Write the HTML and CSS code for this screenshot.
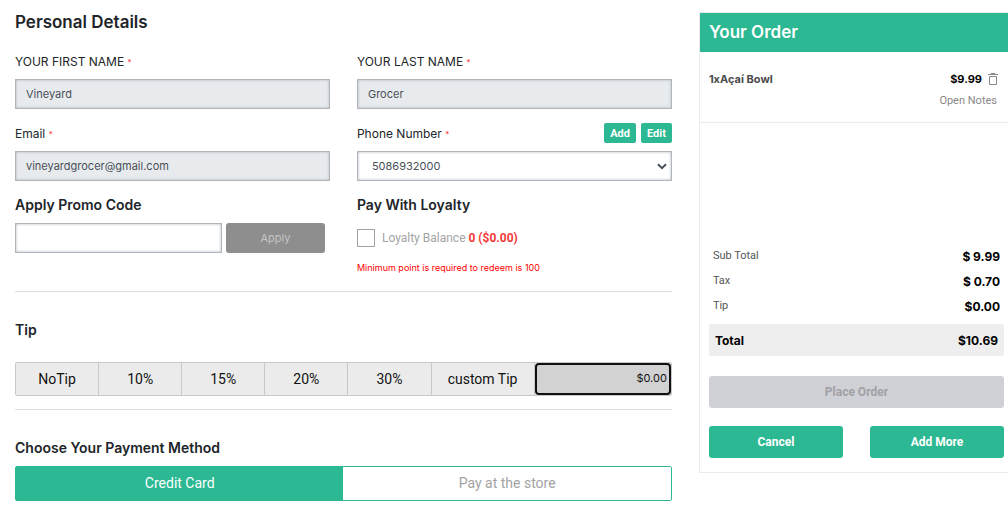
FILE: index.html
```html
<!DOCTYPE html>
<html lang="en">
<head>
    <meta charset="UTF-8">
    <meta name="viewport" content="width=device-width, initial-scale=1.0">
    <title>Checkout</title>
    <link rel="stylesheet" href="styles.css">
</head>
<body>
    <div class="checkout">
        <main class="details">
            <h1 class="page-title">Personal Details</h1>

            <div class="form-grid">
                <div class="field">
                    <div class="field-head">
                        <label for="first-name">YOUR FIRST NAME <span class="required">*</span></label>
                    </div>
                    <input class="control" type="text" id="first-name" value="Vineyard" disabled>
                </div>
                <div class="field">
                    <div class="field-head">
                        <label for="last-name">YOUR LAST NAME <span class="required">*</span></label>
                    </div>
                    <input class="control" type="text" id="last-name" value="Grocer" disabled>
                </div>
                <div class="field">
                    <div class="field-head">
                        <label for="email">Email <span class="required">*</span></label>
                    </div>
                    <input class="control" type="email" id="email" value="vineyardgrocer@gmail.com" disabled>
                </div>
                <div class="field">
                    <div class="field-head">
                        <label for="phone">Phone Number <span class="required">*</span></label>
                        <div class="phone-actions">
                            <button type="button" class="btn-small">Add</button>
                            <button type="button" class="btn-small">Edit</button>
                        </div>
                    </div>
                    <div class="select-wrap">
                        <select class="control" id="phone">
                            <option>5086932000</option>
                        </select>
                        <svg class="chevron" width="10" height="7" viewBox="0 0 10 7" aria-hidden="true">
                            <path d="M1 1.2L5 5.2L9 1.2" fill="none" stroke="#495057" stroke-width="2"/>
                        </svg>
                    </div>
                </div>
                <div class="field">
                    <div class="field-head">
                        <label class="section-title" for="promo">Apply Promo Code</label>
                    </div>
                    <div class="promo">
                        <input class="control" type="text" id="promo">
                        <button type="button" class="btn-apply" disabled>Apply</button>
                    </div>
                </div>
                <div class="field">
                    <div class="field-head">
                        <h2 class="section-title">Pay With Loyalty</h2>
                    </div>
                    <div class="loyalty">
                        <input type="checkbox" id="loyalty">
                        <label for="loyalty">Loyalty Balance <strong>0 ($0.00)</strong></label>
                    </div>
                    <p class="loyalty-note">Minimum point is required to redeem is 100</p>
                </div>
            </div>

            <section class="tip">
                <h2 class="section-title">Tip</h2>
                <div class="tip-bar">
                    <button type="button">NoTip</button>
                    <button type="button">10%</button>
                    <button type="button">15%</button>
                    <button type="button">20%</button>
                    <button type="button">30%</button>
                    <button type="button">custom Tip</button>
                    <input type="text" value="$0.00" aria-label="Tip amount">
                </div>
            </section>

            <section class="payment">
                <h2 class="section-title">Choose Your Payment Method</h2>
                <div class="payment-tabs">
                    <button type="button" class="active">Credit Card</button>
                    <button type="button">Pay at the store</button>
                </div>
            </section>
        </main>

        <aside class="order">
            <h2 class="order-header">Your Order</h2>
            <div class="order-item">
                <div class="item-row">
                    <span class="item-name">1xAçaí Bowl</span>
                    <span class="item-price">$9.99</span>
                    <button type="button" class="btn-delete" aria-label="Remove item">
                        <svg width="10" height="12" viewBox="0 0 10 12" aria-hidden="true">
                            <path d="M0 1.5H10M3 .5H7M1.5 3.5H8.5V11.5H1.5Z" fill="none" stroke="#888" stroke-width="1"/>
                        </svg>
                    </button>
                </div>
                <a class="item-notes" href="#">Open Notes</a>
            </div>

            <div class="order-summary">
                <table class="totals">
                    <tbody>
                        <tr>
                            <th scope="row">Sub Total</th>
                            <td>$ 9.99</td>
                        </tr>
                        <tr>
                            <th scope="row">Tax</th>
                            <td>$ 0.70</td>
                        </tr>
                        <tr>
                            <th scope="row">Tip</th>
                            <td>$0.00</td>
                        </tr>
                    </tbody>
                </table>
                <div class="grand-total">
                    <span>Total</span>
                    <span>$10.69</span>
                </div>
                <button type="button" class="btn btn-place" disabled>Place Order</button>
                <div class="order-actions">
                    <button type="button" class="btn">Cancel</button>
                    <button type="button" class="btn">Add More</button>
                </div>
            </div>
        </aside>
    </div>
</body>
</html>
```

FILE: styles.css
```css
* {
    box-sizing: border-box;
}
body {
    margin: 0;
    font-family: Inter, Roboto, sans-serif;
    font-size: 12px;
    color: #212529;
    background: #fff;
}
h1, h2, p {
    margin: 0;
}
button, input, select {
    font-family: inherit;
    margin: 0;
}
button {
    cursor: pointer;
    border: 0;
}
.checkout {
    display: grid;
    grid-template-columns: 17fr 8fr;
    gap: 27px;
    align-items: start;
    padding-left: 15px;
}

/* Form */
.page-title {
    padding-top: 10px;
    font-size: 17px;
    font-weight: 600;
    line-height: 24px;
}
.section-title {
    font-size: 14px;
    font-weight: 600;
    line-height: 20px;
}
.form-grid {
    display: grid;
    grid-template-columns: 1fr 1fr;
    column-gap: 27px;
    row-gap: 11px;
    padding: 14px 0 15px;
    border-bottom: 1px solid #dedede;
}
.field-head {
    display: flex;
    justify-content: space-between;
    align-items: center;
    height: 26px;
    margin-bottom: 5px;
}
.required {
    color: #f33;
    font-size: 8px;
    vertical-align: 1px;
}
.control {
    display: block;
    width: 100%;
    height: 30px;
    padding: 0 10px;
    border: 1px solid #b1b6bd;
    border-radius: 0;
    background: #fff;
    box-shadow: inset 0 0 3px #b1b6bd;
    color: #495057;
    font-size: 11px;
}
.control:disabled {
    background: #e8ebee;
    opacity: 1;
}
.phone-actions {
    display: flex;
    gap: 5px;
}
.btn-small {
    height: 20px;
    padding: 0 6px;
    border-radius: 2px;
    background: #2bb892;
    color: #fff;
    font-family: Roboto, sans-serif;
    font-size: 11px;
    font-weight: 700;
}
.select-wrap {
    position: relative;
}
.select-wrap .control {
    appearance: none;
    padding-left: 14px;
}
.chevron {
    position: absolute;
    top: 12px;
    right: 5px;
    pointer-events: none;
}
.promo {
    display: flex;
    gap: 4px;
    padding-right: 5px;
}
.promo .control {
    flex: 1;
    min-width: 0;
}
.btn-apply {
    width: 99px;
    border-radius: 3px;
    background: #8e8e8e;
    color: #c4c4c4;
    font-size: 11px;
}
.loyalty {
    display: flex;
    align-items: center;
    gap: 7px;
    height: 30px;
    font-family: Roboto, sans-serif;
    color: #a3a3a3;
}
.loyalty input {
    appearance: none;
    width: 18px;
    height: 18px;
    border: 1px solid #a3a3a3;
    background: #fff;
}
.loyalty strong {
    color: #f23a3a;
}
.loyalty-note {
    padding-top: 7px;
    color: #f00;
    font-size: 9px;
    line-height: 16px;
}

/* Tip */
.tip {
    padding: 28px 0 13px;
    border-bottom: 1px solid #dedede;
}
.tip-bar {
    display: grid;
    grid-template-columns: repeat(5, 25fr) 31fr 41fr;
    height: 34px;
    margin-top: 22px;
    border: 1px solid #c8c8c8;
    border-radius: 2px;
    background: #ebebeb;
}
.tip-bar button {
    padding: 0;
    border-right: 1px solid #c8c8c8;
    background: none;
    color: #111;
    font-family: Roboto, sans-serif;
    font-size: 14px;
}
.tip-bar input {
    width: 100%;
    min-width: 0;
    padding: 0 2px 2px;
    border: 2px solid #101010;
    border-radius: 4px;
    background: #d2d2d2;
    color: #111;
    font-size: 11px;
    text-align: right;
}

/* Payment */
.payment {
    padding: 28px 0 8px;
}
.payment-tabs {
    display: grid;
    grid-template-columns: 1fr 1fr;
    height: 35px;
    margin-top: 8px;
    border: 1px solid #2bb892;
    border-radius: 2px;
}
.payment-tabs button {
    padding-bottom: 2px;
    background: #fff;
    color: #a3a3a3;
    font-family: Roboto, sans-serif;
    font-size: 14px;
}
.payment-tabs .active {
    background: #2bb892;
    color: #fff;
}

/* Order panel */
.order {
    margin-top: 12px;
    border: 1px solid #ebebeb;
    border-right: 0;
}
.order-header {
    padding: 0 9px;
    background: #2bb892;
    color: #fff;
    font-size: 17px;
    font-weight: 600;
    line-height: 39px;
}
.order-item {
    padding: 17px 9px 11px;
    border-bottom: 1px solid #ebebeb;
}
.item-row {
    display: flex;
    align-items: center;
    height: 20px;
    font-size: 11px;
    font-weight: 700;
}
.item-name {
    flex: 1;
    color: #4b4b4b;
}
.item-price {
    color: #000;
}
.btn-delete {
    display: flex;
    margin: 0 1px 0 6px;
    padding: 0;
    background: none;
}
.item-notes {
    display: block;
    margin-top: 2px;
    padding-right: 2px;
    color: #888;
    font-family: Roboto, sans-serif;
    font-size: 11px;
    line-height: 20px;
    text-align: right;
    text-decoration: none;
}
.order-summary {
    padding: 121px 4px 14px 9px;
}
.totals {
    width: 100%;
    border-collapse: collapse;
}
.totals th,
.totals td {
    height: 25px;
    padding: 0 4px;
}
.totals th {
    padding-bottom: 2px;
    color: #555;
    font-family: Roboto, sans-serif;
    font-size: 11px;
    font-weight: 400;
    text-align: left;
}
.totals td {
    color: #000;
    font-size: 12px;
    font-weight: 700;
    text-align: right;
}
.grand-total {
    display: flex;
    justify-content: space-between;
    align-items: center;
    height: 32px;
    margin: 5px 0 20px;
    padding: 0 6px;
    border-radius: 3px;
    background: #eee;
    color: #000;
    font-size: 12px;
    font-weight: 700;
}
.btn {
    height: 32px;
    border-radius: 3px;
    background: #2bb892;
    color: #fff;
    font-family: Roboto, sans-serif;
    font-size: 12px;
    font-weight: 700;
}
.btn-place {
    width: 100%;
    background: #d0d1d6;
    color: #a0a0a5;
}
.order-actions {
    display: grid;
    grid-template-columns: 1fr 1fr;
    gap: 27px;
    margin-top: 18px;
}
```
